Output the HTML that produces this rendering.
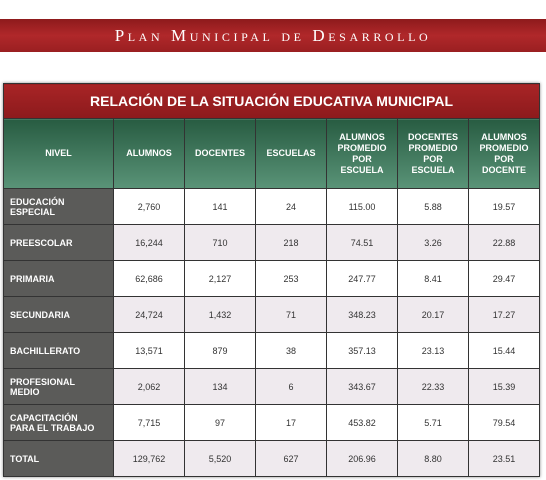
<!DOCTYPE html>
<html><head><meta charset="utf-8"><style>
body{margin:0;width:546px;height:480px;background:#fff;position:relative;overflow:hidden;font-family:"Liberation Sans",sans-serif}
.band{position:absolute;left:0;top:19px;width:546px;height:33px;background:linear-gradient(#8e1a1c,#b0282a 50%,#9a1f21);color:#fff;text-align:center;font-family:"Liberation Serif",serif;font-size:17px;letter-spacing:3.6px;line-height:33px;font-variant:small-caps}
table{position:absolute;left:3px;top:83px;border-collapse:collapse;width:537px;table-layout:fixed;box-shadow:0 0 3px #888}
td,th{border:1px solid #333;text-align:center;font-size:9px;color:#333;padding:0}
.t{background:linear-gradient(#a82426,#8c1a1c);color:#fff;font-size:14px;font-weight:bold;height:34px}
th{background:linear-gradient(#285c42,#5a9478);color:#fff;font-size:9px;font-weight:bold;height:69px;line-height:11px}
td.n{background:#5b5b59;color:#fff;font-weight:bold;text-align:left;padding-left:6px;line-height:10px}
tr.r td{height:35px}
tr.g td{background:#efeaee}
tr.g td.n{background:#5b5b59}
</style></head><body>
<div class="band">Plan Municipal de Desarrollo</div>
<table>
<colgroup><col style="width:110px"><col style="width:71px"><col style="width:71px"><col style="width:71px"><col style="width:71px"><col style="width:71px"><col style="width:71px"></colgroup>
<tr><td class="t" colspan="7">RELACIÓN DE LA SITUACIÓN EDUCATIVA MUNICIPAL</td></tr>
<tr><th>NIVEL</th><th>ALUMNOS</th><th>DOCENTES</th><th>ESCUELAS</th><th>ALUMNOS<br>PROMEDIO<br>POR<br>ESCUELA</th><th>DOCENTES<br>PROMEDIO<br>POR<br>ESCUELA</th><th>ALUMNOS<br>PROMEDIO<br>POR<br>DOCENTE</th></tr>
<tr class="r"><td class="n">EDUCACIÓN<br>ESPECIAL</td><td>2,760</td><td>141</td><td>24</td><td>115.00</td><td>5.88</td><td>19.57</td></tr>
<tr class="r g"><td class="n">PREESCOLAR</td><td>16,244</td><td>710</td><td>218</td><td>74.51</td><td>3.26</td><td>22.88</td></tr>
<tr class="r"><td class="n">PRIMARIA</td><td>62,686</td><td>2,127</td><td>253</td><td>247.77</td><td>8.41</td><td>29.47</td></tr>
<tr class="r g"><td class="n">SECUNDARIA</td><td>24,724</td><td>1,432</td><td>71</td><td>348.23</td><td>20.17</td><td>17.27</td></tr>
<tr class="r"><td class="n">BACHILLERATO</td><td>13,571</td><td>879</td><td>38</td><td>357.13</td><td>23.13</td><td>15.44</td></tr>
<tr class="r g"><td class="n">PROFESIONAL<br>MEDIO</td><td>2,062</td><td>134</td><td>6</td><td>343.67</td><td>22.33</td><td>15.39</td></tr>
<tr class="r"><td class="n">CAPACITACIÓN<br>PARA EL TRABAJO</td><td>7,715</td><td>97</td><td>17</td><td>453.82</td><td>5.71</td><td>79.54</td></tr>
<tr class="r g"><td class="n">TOTAL</td><td>129,762</td><td>5,520</td><td>627</td><td>206.96</td><td>8.80</td><td>23.51</td></tr>
</table>
</body></html>
